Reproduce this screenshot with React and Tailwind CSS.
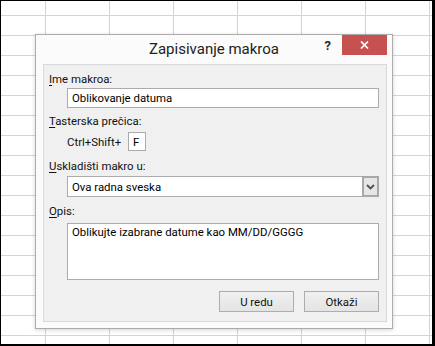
function Label({ accessKey, rest }) {
  return (
    <div className="h-[16px] pl-[5px] text-[11.4px] leading-[16px] text-[#111]">
      <span className="underline underline-offset-[2px]">{accessKey}</span>
      {rest}
    </div>
  );
}

function Button({ children }) {
  return (
    <button className="flex h-[21px] w-[75px] items-center justify-center border border-[#adadad] bg-linear-to-b from-[#f0f0f0] to-[#e4e4e4] text-[11.4px] leading-[16px] text-[#111]">
      {children}
    </button>
  );
}

function MacroDialog() {
  return (
    <div className="absolute left-[34px] top-[33px] flex h-[295px] w-[358px] flex-col border border-[#acacac] bg-[#fbfbfb] shadow-[0_1px_4px_rgba(0,0,0,0.18)]">
      {/* title bar */}
      <div className="relative h-[29px] pt-[4px] text-center text-[15px] leading-[20px] text-[#222]">
        Zapisivanje makroa
        <span className="absolute right-[61px] top-[3px] text-[13px] font-bold leading-[16px] text-[#2a2a2a]">?</span>
        <div className="absolute right-[5px] top-0 flex h-[20px] w-[45px] items-center justify-center bg-[#c75050]">
          <svg width="9" height="8" viewBox="0 0 9 8">
            <path d="M1 0.5 L8 7.5 M8 0.5 L1 7.5" stroke="#fff" strokeWidth="1.7" />
          </svg>
        </div>
      </div>

      {/* body panel */}
      <div className="ml-[7px] mr-[5px] h-[258px] border border-[#d9d9d9] bg-[#f0f0f0] pt-[6px]">
        <Label accessKey="I" rest="me makroa:" />
        <div className="ml-[23px] mr-[7px] mt-[1px] flex h-[20px] items-center border border-[#ababab] bg-white pl-[4px] text-[11.4px] leading-[16px] text-black">
          Oblikovanje datuma
        </div>

        <div className="mt-[5px]">
          <Label accessKey="T" rest="asterska prečica:" />
        </div>
        <div className="ml-[23px] mt-[3px] flex h-[19px] items-center text-[11.4px] leading-[16px] text-[#111]">
          <span className="w-[61px]">Ctrl+Shift+</span>
          <div className="flex h-[19px] w-[18px] items-center border border-[#ababab] bg-white pl-[4px] text-black">F</div>
        </div>

        <div className="mt-[7px]">
          <Label accessKey="U" rest="skladišti makro u:" />
        </div>
        <div className="ml-[23px] mr-[7px] mt-[2px] flex h-[21px] items-center border border-[#ababab] bg-white text-[11.4px] leading-[16px] text-black">
          <span className="flex-1 pl-[4px]">Ova radna sveska</span>
          <div className="-my-px -mr-px flex h-[21px] w-[17px] items-center justify-center border-2 border-[#a8a8a8] bg-[#e6e6e6]">
            <svg width="9" height="6" viewBox="0 0 9 6">
              <path d="M1 1 L4.5 4.5 L8 1" fill="none" stroke="#505050" strokeWidth="1.8" />
            </svg>
          </div>
        </div>

        <div className="mt-[6px]">
          <Label accessKey="O" rest="pis:" />
        </div>
        <div className="ml-[23px] mr-[7px] mt-[4px] h-[57px] border border-[#ababab] bg-white pl-[4px] text-[11.4px] leading-[16px] text-black">
          Oblikujte izabrane datume kao MM/DD/GGGG
        </div>

        <div className="mr-[7px] mt-[11px] flex justify-end gap-[10px]">
          <Button>U redu</Button>
          <Button>Otkaži</Button>
        </div>
      </div>
    </div>
  );
}

export default function App() {
  return (
    <div className="h-[346px] w-[435px] bg-black pb-[2px] pl-px pr-[3px] pt-px font-['Roboto',sans-serif]">
      <div className="relative h-full w-full bg-white bg-[linear-gradient(to_bottom,#d4d4d4_1px,transparent_1px),linear-gradient(to_right,#d4d4d4_1px,transparent_1px)] bg-[size:64px_20px] bg-[position:44px_14px]">
        <MacroDialog />
      </div>
    </div>
  );
}
